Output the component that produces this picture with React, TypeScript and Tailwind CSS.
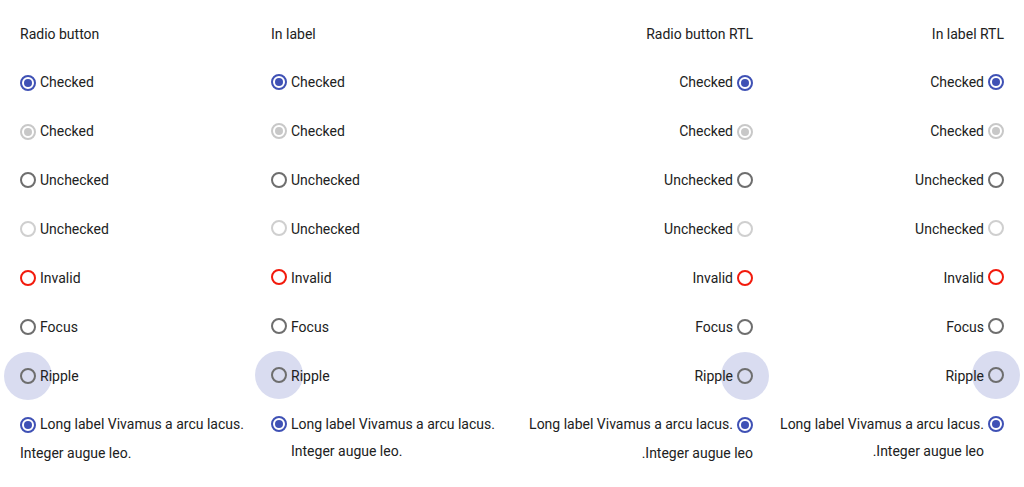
import React from "react";

type Kind =
  | "checked"
  | "checkedDisabled"
  | "unchecked"
  | "uncheckedDisabled"
  | "invalid"
  | "focus"
  | "ripple";

const rows: { kind: Kind; label: string }[] = [
  { kind: "checked", label: "Checked" },
  { kind: "checkedDisabled", label: "Checked" },
  { kind: "unchecked", label: "Unchecked" },
  { kind: "uncheckedDisabled", label: "Unchecked" },
  { kind: "invalid", label: "Invalid" },
  { kind: "focus", label: "Focus" },
  { kind: "ripple", label: "Ripple" },
  { kind: "checked", label: "Long label Vivamus a arcu lacus. Integer augue leo." },
];

const ringClass: Record<Kind, string> = {
  checked: "border-[#3f51b5]",
  checkedDisabled: "border-[#c8c8c8]",
  unchecked: "border-[#6e6e6e]",
  uncheckedDisabled: "border-[#cfcfcf]",
  invalid: "border-[#f21a0c]",
  focus: "border-[#6e6e6e]",
  ripple: "border-[#6e6e6e]",
};

function Radio({ kind }: { kind: Kind }) {
  return (
    <span className="relative inline-flex h-4 w-4 shrink-0 align-middle -mt-[2px] me-1">
      {kind === "ripple" && (
        <span className="absolute left-1/2 top-1/2 h-12 w-12 -translate-x-1/2 -translate-y-1/2 rounded-full bg-[#3f51b5]/20" />
      )}
      <span
        className={`relative flex h-4 w-4 items-center justify-center rounded-full border-2 ${ringClass[kind]}`}
      >
        {kind === "checked" && <span className="h-2 w-2 rounded-full bg-[#3f51b5]" />}
        {kind === "checkedDisabled" && <span className="h-2 w-2 rounded-full bg-[#c8c8c8]" />}
      </span>
    </span>
  );
}

function Column({ title, rtl, inLabel }: { title: string; rtl?: boolean; inLabel?: boolean }) {
  return (
    <div dir={rtl ? "rtl" : "ltr"}>
      <div className="py-[10px] leading-[28.86px]">{title}</div>
      {rows.map((row, i) =>
        inLabel ? (
          <label key={i} className="flex items-start py-[10px] leading-[28.86px]">
            <span className="flex h-[28.86px] items-center">
              <Radio kind={row.kind} />
            </span>
            <span className="relative pt-[0.93px] leading-[27px]">{row.label}</span>
          </label>
        ) : (
          <div key={i} className="py-[10px] leading-[28.86px]">
            <Radio kind={row.kind} />
            <span className="relative">{row.label}</span>
          </div>
        )
      )}
    </div>
  );
}

export default function App() {
  return (
    <div className="min-h-screen bg-white text-[14px] text-[#212121] font-['Roboto',sans-serif]">
      <div className="grid grid-cols-4 gap-x-[20px] px-[20px] pt-[9.6px]">
        <Column title="Radio button" />
        <Column title="In label" inLabel />
        <Column title="Radio button RTL" rtl />
        <Column title="In label RTL" rtl inLabel />
      </div>
    </div>
  );
}
